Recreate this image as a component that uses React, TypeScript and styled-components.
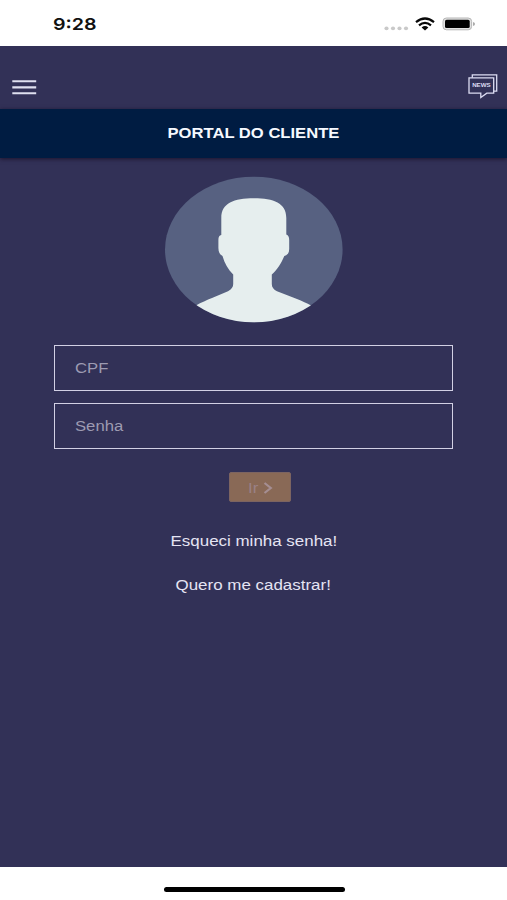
import React from "react";
import styled, { createGlobalStyle } from "styled-components";

const GlobalStyle = createGlobalStyle`
  * { box-sizing: border-box; }
  body { margin: 0; background: #fff; font-family: "Liberation Sans", Arial, sans-serif; }
`;

const Screen = styled.div`
  width: 507px;
  height: 900px;
  display: flex;
  flex-direction: column;
  overflow: hidden;
  background: #fff;
`;

const StatusBar = styled.header`
  height: 46px;
  flex: none;
  display: flex;
  justify-content: space-between;
  padding: 0 32px 0 53px;
`;

const Wide = styled.span<{ $scale?: number; $origin?: string }>`
  display: inline-block;
  white-space: nowrap;
  transform: scaleX(${(p) => p.$scale ?? 1.2});
  transform-origin: ${(p) => p.$origin ?? "center"};
`;

const Clock = styled.time`
  padding-top: 14px;
  font: 600 16.5px/20px Inter, "Liberation Sans", sans-serif;
  color: #111;
`;

const StatusIcons = styled.svg`
  display: block;
  width: 92px;
  height: 20px;
  margin-top: 14px;
`;

const AppBody = styled.main`
  height: 821px;
  flex: none;
  display: flex;
  flex-direction: column;
  background: #323157;
`;

const NavBar = styled.nav`
  height: 63px;
  flex: none;
  display: flex;
  justify-content: space-between;
  padding: 26px 9px 0 12px;
`;

const IconButton = styled.button`
  display: block;
  height: 30px;
  padding: 0;
  border: 0;
  background: none;
  svg { display: block; }
`;

const TitleBar = styled.h1`
  height: 49px;
  flex: none;
  margin: 0;
  text-align: center;
  font-size: 14px;
  line-height: 48px;
  font-weight: 700;
  color: #f6f9ff;
  background: #001c42;
  box-shadow: 0 1px 4px rgba(22, 8, 30, 0.75);
`;

const Form = styled.form`
  display: flex;
  flex-direction: column;
  align-items: center;
  padding-top: 18px;
`;

const Avatar = styled.svg`
  display: block;
  width: 179px;
  height: 147px;
`;

const Fields = styled.div`
  display: flex;
  flex-direction: column;
  gap: 12px;
  padding-top: 22px;
`;

const Field = styled.label`
  width: 399px;
  height: 46px;
  display: block;
  padding-left: 20px;
  border: 1px solid #d2d0e4;
  font-size: 14px;
  line-height: 45px;
  color: #9d9bb2;
`;

const Submit = styled.button`
  width: 62px;
  height: 30px;
  display: flex;
  align-items: center;
  gap: 7px;
  margin: 23px 0 0 12px;
  padding: 1px 0 0 18px;
  border: 1px solid #7c6461;
  border-radius: 2px;
  background: #896956;
  color: #9a8186;
  font: 14px "Liberation Sans", Arial, sans-serif;
`;

const Links = styled.div`
  display: flex;
  flex-direction: column;
  align-items: center;
  gap: 24px;
  padding-top: 29px;
`;

const TextLink = styled.a`
  font-size: 14px;
  line-height: 20px;
  color: #e5e4f3;
`;

const HomeArea = styled.footer`
  height: 33px;
  display: flex;
  justify-content: center;
  padding: 20px 0 0 1px;
`;

const HomeIndicator = styled.div`
  width: 181px;
  height: 5px;
  border-radius: 3px;
  background: #000;
`;

function DeviceStatus() {
  return (
    <StatusIcons viewBox="383 14 92 20" aria-hidden="true">
      <g fill="#c9c9c9">
        {[386.5, 393, 399.5, 406].map((x) => (
          <ellipse key={x} cx={x} cy="28.4" rx="2.1" ry="1.8" />
        ))}
      </g>
      <g fill="none" stroke="#080808" strokeWidth="2.2">
        <path d="M416 22.2Q425 14.8 434 22.2" />
        <path d="M419 25.4Q425 20.2 431 25.4" />
      </g>
      <path d="M421.6 27.5Q425 24.7 428.4 27.5L425 30.4Z" fill="#080808" />
      <rect x="443" y="18" width="28.6" height="11.8" rx="3.4" fill="#e2e2e2" stroke="#b5b5b5" />
      <rect x="445" y="19.8" width="24.7" height="8.2" rx="1.6" fill="#000" />
      <path d="M473 22Q475 22.4 475 24T473 26Z" fill="#aaa" />
    </StatusIcons>
  );
}

export default function App() {
  return (
    <Screen>
      <GlobalStyle />
      <StatusBar>
        <Clock><Wide $scale={1.19} $origin="left">9:28</Wide></Clock>
        <DeviceStatus />
      </StatusBar>
      <AppBody>
        <NavBar>
          <IconButton aria-label="Menu">
            <svg width="25" height="30" viewBox="0 0 25 30">
              <path d="M0.3 9.3H24.2M0.3 15.4H24.2M0.3 21.3H24.2" stroke="#dfe0f0" strokeWidth="2.1" />
            </svg>
          </IconButton>
          <IconButton aria-label="News">
            <svg width="30" height="30" viewBox="468 72 30 30">
              <g fill="none" stroke="#dcdcf2" strokeWidth="1.3">
                <path d="M472.3 77.8V74.8H496.7V91.2H493.8" />
                <path d="M469 77.8H493.7V93.2H486.8L480.8 97.5V93.2H469Z" />
              </g>
              <text x="481.4" y="87.2" textAnchor="middle" textLength="18.5" lengthAdjust="spacingAndGlyphs" fontSize="5.4" fontWeight="700" fontFamily="Liberation Sans" fill="#dcdcf2">NEWS</text>
            </svg>
          </IconButton>
        </NavBar>
        <TitleBar><Wide $scale={1.186}>PORTAL DO CLIENTE</Wide></TitleBar>
        <Form onSubmit={(e) => e.preventDefault()}>
          <Avatar viewBox="164 176 179 147" role="img" aria-label="Avatar">
            <defs>
              <clipPath id="portrait"><ellipse cx="253.8" cy="249.5" rx="88.8" ry="72.8" /></clipPath>
            </defs>
            <ellipse cx="253.8" cy="249.5" rx="88.8" ry="72.8" fill="#576181" />
            <path
              clipPath="url(#portrait)"
              fill="#e6eeee"
              d="M221.3 235V218C221.3 203 234 198.3 253.8 198.3S286.3 203 286.3 218V234.5C288.4 235.3 289.2 237 289.2 240V249C289.2 253 287.5 255 284.3 256C281.5 263 277 270 271.8 274.5V284C271.8 287.5 273.8 289.7 277 291.2L297 299C302 301 307 303.2 311 305.5V324H196V305.5C201 302.5 207 300 212 298L228 291.2C231.5 289.5 233.2 287 233.2 284V274.5C228 269.5 224.5 263 222.5 256C219.8 254.5 218.4 252 218.4 248V240C218.4 237 219.2 235.6 221.3 235Z"
            />
          </Avatar>
          <Fields>
            <Field><Wide $scale={1.19} $origin="left">CPF</Wide></Field>
            <Field><Wide $scale={1.19} $origin="left">Senha</Wide></Field>
          </Fields>
          <Submit disabled>
            <Wide $scale={1.2} $origin="left">Ir</Wide>
            <svg width="10" height="14" viewBox="0 0 10 14">
              <path d="M1.5 2L7.8 7L1.5 12" fill="none" stroke="#a58e92" strokeWidth="2.2" />
            </svg>
          </Submit>
          <Links>
            <TextLink><Wide $scale={1.21}>Esqueci minha senha!</Wide></TextLink>
            <TextLink><Wide $scale={1.21}>Quero me cadastrar!</Wide></TextLink>
          </Links>
        </Form>
      </AppBody>
      <HomeArea><HomeIndicator /></HomeArea>
    </Screen>
  );
}
